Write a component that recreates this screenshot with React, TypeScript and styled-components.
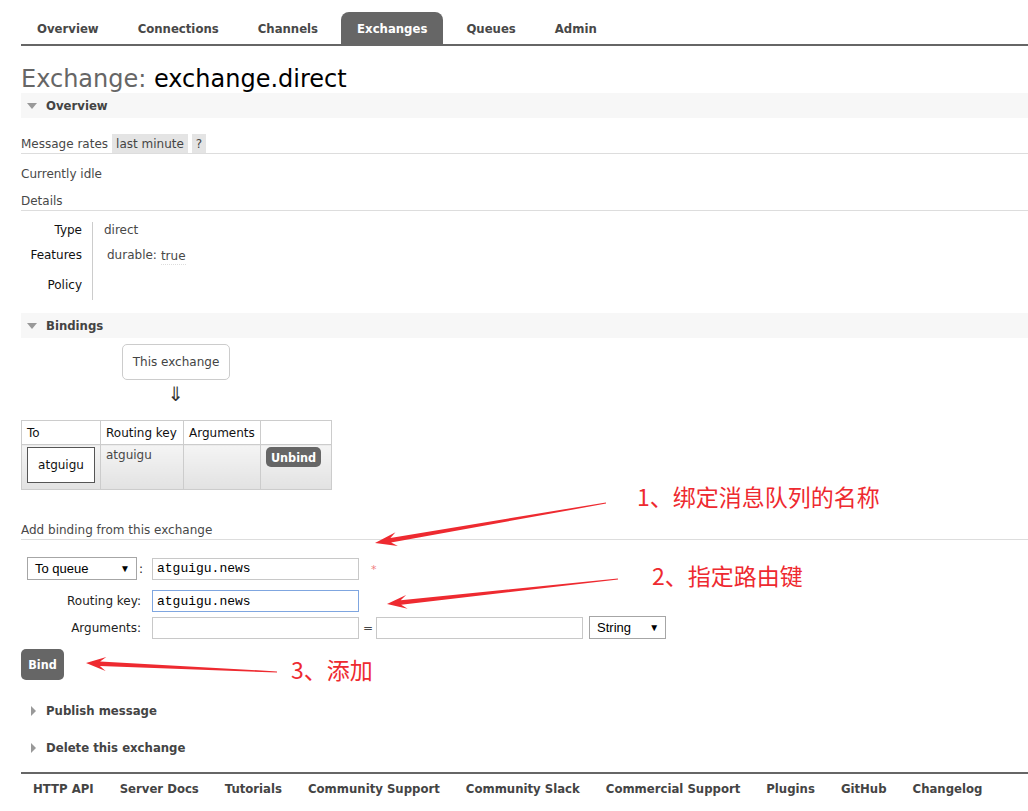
import React from "react";
import styled, { createGlobalStyle } from "styled-components";

const Global = createGlobalStyle`
  html, body { margin: 0; padding: 0; background: #fff; }
  body {
    font-family: "DejaVu Sans", Verdana, sans-serif;
    font-size: 12px;
    color: #484848;
  }
  * { box-sizing: border-box; }
`;

const Page = styled.div`
  position: relative;
  width: 1028px;
  height: 811px;
  overflow: hidden;
  padding: 12px 0 0 21px;
`;

const Nav = styled.ul`
  display: flex;
  gap: 7px;
  margin: 0;
  padding: 0;
  list-style: none;
  height: 34px;
  border-bottom: 2px solid #666;
`;

const Tab = styled.li<{ $active?: boolean }>`
  height: 32px;
  line-height: 33px;
  padding: 0 16px;
  font-family: "DejaVu Sans Condensed", "DejaVu Sans", sans-serif;
  font-weight: bold;
  font-size: 13px;
  color: ${(p) => (p.$active ? "#fff" : "#484848")};
  background: ${(p) => (p.$active ? "#666" : "transparent")};
  border-radius: 8px 8px 0 0;
`;

const Title = styled.h1`
  margin: 20px 0 0;
  font-size: 24px;
  line-height: 27px;
  font-weight: normal;
  color: #000;
  span { color: #666; }
`;

const SectionHeader = styled.div<{ $open?: boolean }>`
  display: flex;
  align-items: center;
  height: 25px;
  padding-left: ${(p) => (p.$open ? "6px" : "10px")};
  background: ${(p) => (p.$open ? "#f7f7f7" : "transparent")};
  font-family: "DejaVu Sans Condensed", "DejaVu Sans", sans-serif;
  font-weight: bold;
  font-size: 13px;
  color: #444;
`;

const TriDown = styled.span`
  width: 0;
  height: 0;
  border-left: 5px solid transparent;
  border-right: 5px solid transparent;
  border-top: 6px solid #999;
  margin-right: 9px;
`;

const TriRight = styled.span`
  width: 0;
  height: 0;
  border-top: 5px solid transparent;
  border-bottom: 5px solid transparent;
  border-left: 5px solid #999;
  margin-right: 10px;
`;

const RatesRow = styled.div`
  display: flex;
  align-items: stretch;
  gap: 4px;
  margin-top: 16px;
  height: 20px;
  border-bottom: 1px solid #ddd;
  line-height: 19px;
  > span { padding-top: 1px; }
`;

const Pill = styled.span`
  background: #e4e4e4;
  padding: 0 4px;
  color: #444;
`;

const PlainLine = styled.div<{ $mt: number; $rule?: boolean }>`
  margin-top: ${(p) => p.$mt}px;
  height: ${(p) => (p.$rule ? 21 : 20)}px;
  line-height: 22px;
  border-bottom: ${(p) => (p.$rule ? "1px solid #ddd" : "none")};
`;

const DetailsGrid = styled.div`
  display: grid;
  grid-template-columns: 72px 1fr;
  grid-template-rows: 25px 30px 23px;
  margin-top: 11px;
  line-height: 16px;
`;

const DLabel = styled.div`
  text-align: right;
  padding-right: 10px;
  border-right: 1px solid #ccc;
  color: #111;
`;

const DValue = styled.div<{ $pl?: number }>`
  padding-left: ${(p) => p.$pl ?? 11}px;
  display: flex;
  align-items: flex-start;
  gap: 4px;
`;

const TrueVal = styled.span`
  margin-top: 2px;
  line-height: 15px;
  border-bottom: 1px dotted #ddd;
`;

const Spacer = styled.div<{ $h: number }>`
  height: ${(p) => p.$h}px;
`;

const ExchangeBox = styled.div`
  margin: 6px 0 0 101px;
  width: 108px;
  height: 36px;
  border: 1px solid #ccc;
  border-radius: 5px;
  display: flex;
  align-items: center;
  justify-content: center;
  color: #444;
`;

const DownArrow = styled.div`
  margin: 3px 0 0 145px;
  width: 20px;
  text-align: center;
  font-size: 20px;
  line-height: 22px;
  color: #333;
`;

const BTable = styled.table`
  margin-top: 15px;
  border-collapse: collapse;
  table-layout: fixed;
  width: 310px;
  th, td {
    border: 1px solid #ccc;
    padding: 0 5px;
    text-align: left;
    font-weight: normal;
  }
  th {
    height: 24px;
    color: #111;
  }
  td {
    height: 45px;
    vertical-align: top;
    padding-top: 2px;
    background: linear-gradient(#f4f4f4, #e2e2e2);
  }
`;

const QueueBox = styled.div`
  width: 68px;
  height: 36px;
  border: 1px solid #555;
  background: #fff;
  display: flex;
  align-items: center;
  justify-content: center;
  color: #111;
`;

const KeyText = styled.div`
  line-height: 16px;
`;

const DarkButton = styled.button<{ $w: number; $h: number }>`
  width: ${(p) => p.$w}px;
  height: ${(p) => p.$h}px;
  padding: 0;
  border: none;
  border-radius: 5px;
  background: #666;
  color: #fff;
  font-family: "DejaVu Sans Condensed", "DejaVu Sans", sans-serif;
  font-weight: bold;
  font-size: 12.5px;
`;

const FormRow = styled.div<{ $mt: number }>`
  display: flex;
  align-items: center;
  margin-top: ${(p) => p.$mt}px;
`;

const FormLabel = styled.div<{ $start?: boolean }>`
  flex: 0 0 120px;
  width: 120px;
  color: #222;
  display: flex;
  justify-content: ${(p) => (p.$start ? "flex-start" : "flex-end")};
  padding-left: ${(p) => (p.$start ? "6px" : "0")};
  align-items: center;
`;

const FakeSelect = styled.div<{ $w: number }>`
  flex: 0 0 ${(p) => p.$w}px;
  width: ${(p) => p.$w}px;
  height: 23px;
  border: 1px solid #a6a6a6;
  background: #fff;
  display: flex;
  align-items: center;
  justify-content: space-between;
  padding: 0 6px 0 7px;
  font-family: "Liberation Sans", Arial, sans-serif;
  font-size: 13px;
  color: #000;
  span { font-size: 10px; }
`;

const Colon = styled.span`
  margin-left: 2px;
`;

const TextInput = styled.input<{ $focus?: boolean }>`
  flex: 0 0 207px;
  width: 207px;
  height: 22px;
  margin: 0 0 0 11px;
  padding: 0 4px;
  border: 1px solid ${(p) => (p.$focus ? "#7fa6e0" : "#c8c8c8")};
  font-family: "Liberation Mono", "Courier New", monospace;
  font-size: 13px;
  color: #000;
  outline: none;
`;

const Star = styled.span`
  margin-left: 12px;
  margin-top: 2px;
  color: #f08080;
  font-size: 11px;
`;

const Eq = styled.span`
  margin: 0 3px 0 4px;
`;

const PlainInput = styled(TextInput)`
  margin: 0;
`;

const Gap = styled.span<{ $w: number }>`
  flex: 0 0 ${(p) => p.$w}px;
`;

const Footer = styled.div`
  margin-top: 12px;
  border-top: 2px solid #666;
  height: 30px;
  display: flex;
  align-items: center;
  padding: 1px 0 0 12px;
  gap: 26px;
  font-family: "DejaVu Sans Condensed", "DejaVu Sans", sans-serif;
  font-weight: bold;
  font-size: 13px;
  color: #444;
`;

const Note = styled.div<{ $x: number; $y: number }>`
  position: absolute;
  left: ${(p) => p.$x}px;
  top: ${(p) => p.$y}px;
  font-family: "Noto Sans CJK SC", "Microsoft YaHei", sans-serif;
  font-size: 23px;
  line-height: 26px;
  color: #ee2a30;
  white-space: nowrap;
`;

const Overlay = styled.svg`
  position: absolute;
  left: 0;
  top: 0;
  pointer-events: none;
`;

type Pt = [number, number];

function arrowPoints(tail: Pt, tip: Pt, headLen: number, headHalf: number): string {
  const dx = tip[0] - tail[0];
  const dy = tip[1] - tail[1];
  const len = Math.hypot(dx, dy);
  const ux = dx / len;
  const uy = dy / len;
  const nx = -uy;
  const ny = ux;
  const at = (d: number, w: number): Pt => [
    tip[0] - ux * d + nx * w,
    tip[1] - uy * d + ny * w,
  ];
  const pts: Pt[] = [
    tip,
    at(headLen, headHalf),
    at(headLen - 6, 2.2),
    [tail[0] + nx * 0.6, tail[1] + ny * 0.6],
    [tail[0] - nx * 0.6, tail[1] - ny * 0.6],
    at(headLen - 6, -2.2),
    at(headLen, -headHalf),
  ];
  return pts.map((p) => `${p[0].toFixed(1)},${p[1].toFixed(1)}`).join(" ");
}

const arrows: { tail: Pt; tip: Pt; len: number; half: number }[] = [
  { tail: [606, 503], tip: [375, 543], len: 22, half: 7 },
  { tail: [618, 579], tip: [387, 604], len: 20, half: 7 },
  { tail: [277, 672], tip: [86, 663], len: 20, half: 7 },
];

const footerLinks = [
  "HTTP API",
  "Server Docs",
  "Tutorials",
  "Community Support",
  "Community Slack",
  "Commercial Support",
  "Plugins",
  "GitHub",
  "Changelog",
];

export default function App() {
  return (
    <>
      <Global />
      <Page>
        <Nav>
          <Tab>Overview</Tab>
          <Tab>Connections</Tab>
          <Tab>Channels</Tab>
          <Tab $active>Exchanges</Tab>
          <Tab>Queues</Tab>
          <Tab>Admin</Tab>
        </Nav>

        <Title>
          <span>Exchange:</span> exchange.direct
        </Title>

        <SectionHeader $open>
          <TriDown />
          Overview
        </SectionHeader>

        <RatesRow>
          <span>Message rates</span>
          <Pill>last minute</Pill>
          <Pill>?</Pill>
        </RatesRow>

        <PlainLine $mt={9}>Currently idle</PlainLine>
        <PlainLine $mt={7} $rule>
          Details
        </PlainLine>

        <DetailsGrid>
          <DLabel>Type</DLabel>
          <DValue>direct</DValue>
          <DLabel>Features</DLabel>
          <DValue $pl={14}>
            <span>durable:</span>
            <TrueVal>true</TrueVal>
          </DValue>
          <DLabel>Policy</DLabel>
          <DValue />
        </DetailsGrid>

        <Spacer $h={13} />
        <SectionHeader $open>
          <TriDown />
          Bindings
        </SectionHeader>

        <ExchangeBox>This exchange</ExchangeBox>
        <DownArrow>⇓</DownArrow>

        <BTable>
          <colgroup>
            <col style={{ width: 79 }} />
            <col style={{ width: 83 }} />
            <col style={{ width: 77 }} />
            <col style={{ width: 71 }} />
          </colgroup>
          <thead>
            <tr>
              <th>To</th>
              <th>Routing key</th>
              <th>Arguments</th>
              <th></th>
            </tr>
          </thead>
          <tbody>
            <tr>
              <td>
                <QueueBox>atguigu</QueueBox>
              </td>
              <td>
                <KeyText>atguigu</KeyText>
              </td>
              <td></td>
              <td>
                <DarkButton $w={55} $h={20}>Unbind</DarkButton>
              </td>
            </tr>
          </tbody>
        </BTable>

        <PlainLine $mt={29} $rule>
          Add binding from this exchange
        </PlainLine>

        <FormRow $mt={17}>
          <FormLabel $start>
            <FakeSelect $w={110}>
              To queue <span>▼</span>
            </FakeSelect>
            <Colon>:</Colon>
          </FormLabel>
          <TextInput readOnly value="atguigu.news" />
          <Star>*</Star>
        </FormRow>
        <FormRow $mt={10}>
          <FormLabel>Routing key:</FormLabel>
          <TextInput readOnly $focus value="atguigu.news" />
        </FormRow>
        <FormRow $mt={4}>
          <FormLabel>Arguments:</FormLabel>
          <TextInput readOnly value="" />
          <Eq>=</Eq>
          <PlainInput readOnly value="" />
          <Gap $w={6} />
          <FakeSelect $w={77}>
            String <span>▼</span>
          </FakeSelect>
        </FormRow>

        <Spacer $h={10} />
        <DarkButton $w={43} $h={31}>Bind</DarkButton>

        <Spacer $h={18} />
        <SectionHeader>
          <TriRight />
          Publish message
        </SectionHeader>
        <Spacer $h={12} />
        <SectionHeader>
          <TriRight />
          Delete this exchange
        </SectionHeader>

        <Footer>
          {footerLinks.map((l) => (
            <span key={l}>{l}</span>
          ))}
        </Footer>

        <Overlay width={1028} height={811} viewBox="0 0 1028 811">
          {arrows.map((a, i) => (
            <polygon key={i} points={arrowPoints(a.tail, a.tip, a.len, a.half)} fill="#ee2a30" />
          ))}
        </Overlay>
        <Note $x={637} $y={483}>1、绑定消息队列的名称</Note>
        <Note $x={652} $y={562}>2、指定路由键</Note>
        <Note $x={291} $y={656}>3、添加</Note>
      </Page>
    </>
  );
}
